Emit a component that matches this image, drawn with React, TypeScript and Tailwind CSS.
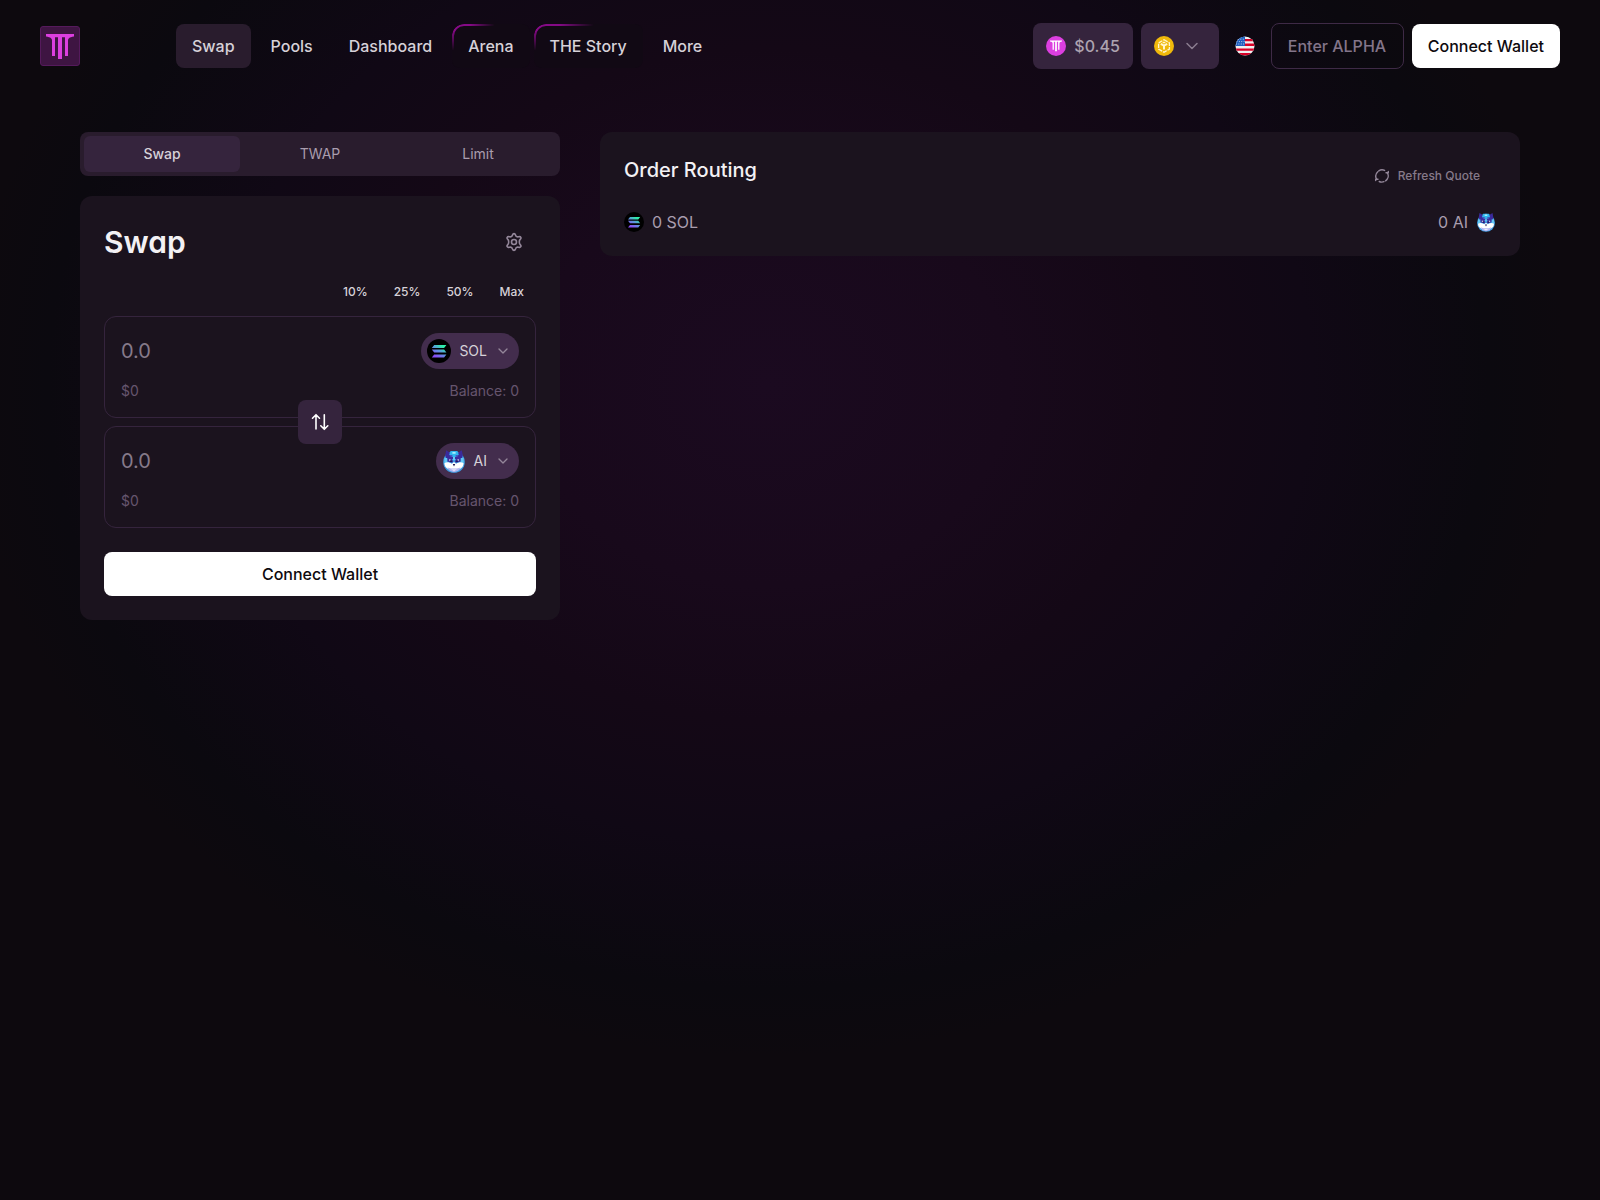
import {useState, type ReactNode} from 'react';
import {ChevronDown} from 'lucide-react';

const navItems = [
    {label: 'Swap', active: true},
    {label: 'Pools'},
    {label: 'Dashboard'},
    {label: 'Arena', glow: true},
    {label: 'THE Story', glow: true},
    {label: 'More'},
];

const tabs = ['Swap', 'TWAP', 'Limit'];
const percentages = ['10%', '25%', '50%', 'Max'];

type IconProps = {className?: string};

function TempleMark({className}: IconProps) {
    return (
        <svg viewBox="0 -1 28 26" fill="currentColor" className={className} aria-hidden="true">
            <path d="M0 0h28v2.6c-2.4.4-4 .8-5 1.6-.7.6-1 1.200-1 2.200V22H19V3.200H16V25H12V3.200H9V22H6V6.400c0-1-.3-1.600-1-2.200C4 3.400 2.400 3 0 2.600z" />
        </svg>
    );
}

function SolIcon({className}: IconProps) {
    return (
        <svg viewBox="0 0 24 24" className={className} aria-hidden="true">
            <defs>
                <linearGradient id="sol" x1="7" y1="18.5" x2="16" y2="5.5" gradientUnits="userSpaceOnUse">
                    <stop offset="0.1" stopColor="#8a4df5" />
                    <stop offset="0.5" stopColor="#5f8fe0" />
                    <stop offset="0.9" stopColor="#2df0a8" />
                </linearGradient>
            </defs>
            <circle cx="12" cy="12" r="12" fill="#000" />
            <path fill="url(#sol)" d="M7.2 6h12.2l-2.300 3H4.800zM4.800 10.500h12.300l2.300 3H7.200zM7.200 15.500h12.200l-2.300 3H4.800z" />
        </svg>
    );
}

function AiIcon({className}: IconProps) {
    return (
        <svg viewBox="0 0 24 24" className={className} aria-hidden="true">
            <circle cx="12" cy="13" r="10.800" fill="#3f9fe4" />
            <path fill="#3a2a9c" d="M4.200 1.200 8.400 4h7.200l4.200-2.800 1 5.400-1.200 3.400H4.400L3.200 6.600z" />
            <path fill="#2fb6ee" d="M8.600 2h6.800l1.400 3.600-2 2.400H9.200l-2-2.400z" />
            <path fill="#a4ecfc" d="M10.400 3h3.200v1.800h-3.200z" />
            <path fill="#4b3bb4" d="M8 6.200h2.400v1.600H8zM13.600 6.200H16v1.600h-2.400z" />
            <path fill="#62c8f4" d="M2.400 9h3v4.400l-3 1zM21.600 9h-3v4.400l3 1zM11 8h2v3h-2z" />
            <path fill="#3c309f" d="M5.400 9.400h4.200l1.600 3.200-1.200 1.200-4.600-1.400zM18.600 9.400h-4.200l-1.600 3.200 1.200 1.200 4.600-1.400z" />
            <path fill="#fff" d="M2.400 14.200c2.200-1.400 5-1 7.400.6L12 13l2.200 1.800c2.400-1.600 5.200-2 7.400-.6 0 2.600-1.400 4.600-4 6L12 21.600l-5.600-1.400c-2.600-1.400-4-3.400-4-6z" />
            <path fill="#b4b6f2" d="M5.400 18.400 9 19.600h6l3.600-1.200-2.200 3.400-4.400 1.400-4.400-1.400z" />
            <path fill="#fff" d="M9 20.600h6l-3 1.200z" />
            <path fill="#fff" d="M7 10.600h1.600v1H7zM15.400 10.600H17v1h-1.600z" />
            <path fill="#1c1450" d="M8.200 11.400h1.600V13H8.200zM14.200 11.400h1.600V13h-1.600zM10.800 15h2.400L12 17.400z" />
        </svg>
    );
}

function BnbIcon({className}: IconProps) {
    return (
        <svg viewBox="0 0 20 20" className={className} aria-hidden="true">
            <circle cx="10" cy="10" r="10" fill="#f0b90b" />
            <path
                d="M10 3.800 15.400 6.900v6.200L10 16.200 4.600 13.100V6.900z"
                fill="none"
                stroke="#fff5d0"
                strokeWidth="1.300"
                strokeDasharray="4.200 1"
            />
            <path d="M6.800 7.800 10 9.700l3.200-1.900M10 9.500v4" fill="none" stroke="#fff5d0" strokeWidth="2" />
            <path d="M8.200 6.500 10 5.500l1.800 1L10 7.500z" fill="#fff5d0" />
        </svg>
    );
}

function FlagIcon({className}: IconProps) {
    return (
        <svg viewBox="0 0 20 20" className={className} aria-hidden="true">
            <clipPath id="flag">
                <circle cx="10" cy="10" r="9.500" />
            </clipPath>
            <g clipPath="url(#flag)">
                <path fill="#f0f0f0" d="M0 0h20v20H0z" />
                <path fill="#d80027" d="M9.500 2.900H20v2.400H9.500zM9.500 7.500H20v2.500H9.500zM0 12.400h20v2.300H0zM0 17.100h20v2.400H0z" />
                <path fill="#1f5fbf" d="M0 0h10v10H0z" />
                <path
                    stroke="#dfe8f6"
                    strokeWidth="0.900"
                    strokeDasharray="0.900 1.500"
                    d="M3 3.200h7M1.500 5.600h8M1 8h9"
                />
            </g>
        </svg>
    );
}

function GearIcon({className}: IconProps) {
    return (
        <svg
            viewBox="0 0 20 20"
            className={className}
            fill="none"
            stroke="currentColor"
            strokeWidth="1.600"
            strokeLinejoin="round"
            aria-hidden="true"
        >
            <path d="M8.500 3C8.800 2 9.200 1.600 10 1.600s1.200.4 1.500 1.400c.4 1.500 1.600 2.200 3.100 1.800 1.100-.3 1.800-.2 2.200.5.4.7.200 1.300-.6 2.100-1.200 1.200-1.200 4 0 5.200.8.800 1 1.400.6 2.100-.4.700-1.100.8-2.200.5-1.500-.4-2.700.3-3.100 1.800-.3 1-.7 1.400-1.500 1.400s-1.200-.4-1.500-1.400c-.4-1.500-1.600-2.200-3.100-1.800-1.100.3-1.800.2-2.200-.5-.4-.7-.2-1.300.6-2.100 1.200-1.200 1.200-4 0-5.200-.8-.8-1-1.400-.6-2.100.4-.7 1.100-.8 2.200-.5C6.900 5.200 8.100 4.500 8.500 3z" />
            <circle cx="10" cy="10" r="2.500" />
        </svg>
    );
}

function RefreshIcon({className}: IconProps) {
    return (
        <svg
            viewBox="0 0 16 16"
            className={className}
            fill="none"
            stroke="currentColor"
            strokeWidth="1.400"
            strokeLinecap="round"
            strokeLinejoin="round"
            aria-hidden="true"
        >
            <path d="M4.800 2.800A6 6 0 0 1 10.600 2.400M13.600 5.200A6 6 0 0 1 11.600 12.800M10 13.700A6 6 0 0 1 5.200 13.500M2.400 10.800A6 6 0 0 1 3.800 3.700" />
            <path d="M12 4.800h2.300V3.400M4 11.200H1.700v1.400" />
        </svg>
    );
}

function SwitchIcon({className}: IconProps) {
    return (
        <svg
            viewBox="0 0 20 20"
            className={className}
            fill="none"
            stroke="currentColor"
            strokeWidth="1.600"
            strokeLinecap="round"
            strokeLinejoin="round"
            aria-hidden="true"
        >
            <path d="M6 17V3M2.500 6.200 6 2.700l3.500 3.500M14.300 2.700v14M10.800 13.800l3.500 3.500 3.500-3.500" />
        </svg>
    );
}

function Header() {
    return (
        <header className="flex items-center justify-between px-10 py-[23px]">
            <div className="flex items-center gap-24">
                <a
                    href="#"
                    aria-label="Home"
                    className="flex size-10 items-center justify-center rounded-[3px] border border-[#551a5c] bg-[#3e1542] text-[#dc3fe0]"
                >
                    <TempleMark className="w-7" />
                </a>
                <nav className="flex gap-1">
                    {navItems.map(({label, active, glow}) => (
                        <a
                            key={label}
                            href="#"
                            className={`relative flex h-11 items-center rounded-lg px-4 font-medium text-[#d6d1d8] ${active ? 'bg-[#291c2d]' : ''} ${glow ? 'bg-[#110914]' : ''}`}
                        >
                            {glow && (
                                <span className="absolute inset-0 rounded-xl border-2 border-[#850a86] mask-[radial-gradient(ellipse_45%_62%_at_10%_0%,#000_30%,transparent_100%)]" />
                            )}
                            {label}
                        </a>
                    ))}
                </nav>
            </div>
            <div className="flex items-center gap-2">
                <button className="flex h-[46px] items-center gap-2 rounded-lg bg-[#35243d] px-[13px] font-medium text-[#ada3b0]">
                    <span className="flex size-5 items-center justify-center rounded-full bg-[#dc3fe0] text-white">
                        <TempleMark className="w-3" />
                    </span>
                    $0.45
                </button>
                <button aria-label="Select network" className="flex h-[46px] items-center gap-2 rounded-lg bg-[#35243d] pr-[17px] pl-[13px]">
                    <BnbIcon className="size-5" />
                    <ChevronDown className="size-5 text-[#8b7d90]" strokeWidth={1.8} />
                </button>
                <button aria-label="Language" className="flex h-11 w-9 items-center justify-center">
                    <FlagIcon className="size-5" />
                </button>
                <input
                    aria-label="Alpha code"
                    placeholder="Enter ALPHA"
                    className="h-[46px] w-[133px] rounded-lg border border-[#3e2a46] bg-transparent px-4 font-medium outline-none placeholder:text-[#83758a]"
                />
                <button className="h-11 rounded-lg bg-white px-4 font-medium text-[#0d090e]">Connect Wallet</button>
            </div>
        </header>
    );
}

type TokenFieldProps = {
    id: string;
    symbol: string;
    icon: ReactNode;
};

function TokenField({id, symbol, icon}: TokenFieldProps) {
    return (
        <div className="rounded-xl border border-[#35243d] p-4">
            <div className="flex items-center justify-between">
                <input
                    id={id}
                    aria-label={`${symbol} amount`}
                    placeholder="0.0"
                    className="h-9 w-0 grow bg-transparent text-xl text-[#d6d1d8] outline-none placeholder:text-[#867a8a]"
                />
                <button className="flex h-9 items-center gap-2 rounded-full bg-[#432d4d] pr-2 pl-[6px] text-sm text-[#d6d1d8]">
                    {icon}
                    {symbol}
                    <ChevronDown className="size-4 text-[#94879a]" strokeWidth={2} />
                </button>
            </div>
            <div className="mt-3 flex justify-between text-sm text-[#66556e]">
                <span>$0</span>
                <span>Balance: 0</span>
            </div>
        </div>
    );
}

function SwapPanel() {
    const [tab, setTab] = useState('Swap');

    return (
        <section className="flex w-1/3 shrink-0 flex-col gap-5">
            <div role="tablist" className="grid grid-cols-3 gap-[2px] rounded-lg bg-[#291c2d] p-1">
                {tabs.map((name) => (
                    <button
                        key={name}
                        role="tab"
                        aria-selected={tab === name}
                        onClick={() => setTab(name)}
                        className={`h-9 rounded-md text-sm ${tab === name ? 'bg-[#35243d] font-medium text-[#d6d1d8]' : 'text-[#a99dae]'}`}
                    >
                        {name}
                    </button>
                ))}
            </div>
            <div className="rounded-xl bg-[#1b131e] p-6">
                <div className="flex h-11 items-center justify-between">
                    <h1 className="text-3xl font-semibold text-[#f3f1f4] [font-feature-settings:'cv11']">Swap</h1>
                    <button aria-label="Settings" className="flex size-11 items-center justify-center text-[#94879a]">
                        <GearIcon className="size-5" />
                    </button>
                </div>
                <div className="mt-3 flex justify-end gap-[2px]">
                    {percentages.map((p) => (
                        <button key={p} className="h-8 px-3 text-xs font-medium text-[#d6d1d8]">
                            {p}
                        </button>
                    ))}
                </div>
                <div className="relative mt-2 flex flex-col gap-2">
                    <TokenField id="from" symbol="SOL" icon={<SolIcon className="size-6" />} />
                    <TokenField id="to" symbol="AI" icon={<AiIcon className="size-6" />} />
                    <button
                        aria-label="Switch tokens"
                        className="absolute top-1/2 left-1/2 flex size-11 -translate-1/2 items-center justify-center rounded-lg bg-[#35243d] text-white"
                    >
                        <SwitchIcon className="size-5" />
                    </button>
                </div>
                <button className="mt-6 h-11 w-full rounded-lg bg-white font-medium text-[#0d090e]">Connect Wallet</button>
            </div>
        </section>
    );
}

function OrderRouting() {
    return (
        <section className="grow rounded-xl bg-[#1b131e] p-6">
            <div className="flex items-start justify-between">
                <h2 className="text-xl font-medium text-[#f3f1f4]">Order Routing</h2>
                <button className="flex h-10 items-center gap-2 px-4 text-xs font-medium text-[#867a8a]">
                    <RefreshIcon className="size-4 text-[#94879a]" />
                    Refresh Quote
                </button>
            </div>
            <div className="mt-4 flex justify-between leading-5 text-[#a99dae]">
                <span className="flex items-center gap-2">
                    <SolIcon className="size-5" />0 SOL
                </span>
                <span className="flex items-center gap-2">
                    0 AI
                    <AiIcon className="size-5" />
                </span>
            </div>
        </section>
    );
}

export default function App() {
    return (
        <div className="min-h-screen bg-[#0d090e] bg-[radial-gradient(ellipse_50%_56%_at_48%_32%,#1b0a20_0%,#18091b_30%,#140816_50%,#100815_68%,#0b090f_90%,#0d090e_100%)] font-['Inter',sans-serif]">
            <Header />
            <main className="flex items-start gap-10 px-20 pt-10">
                <SwapPanel />
                <OrderRouting />
            </main>
        </div>
    );
}
